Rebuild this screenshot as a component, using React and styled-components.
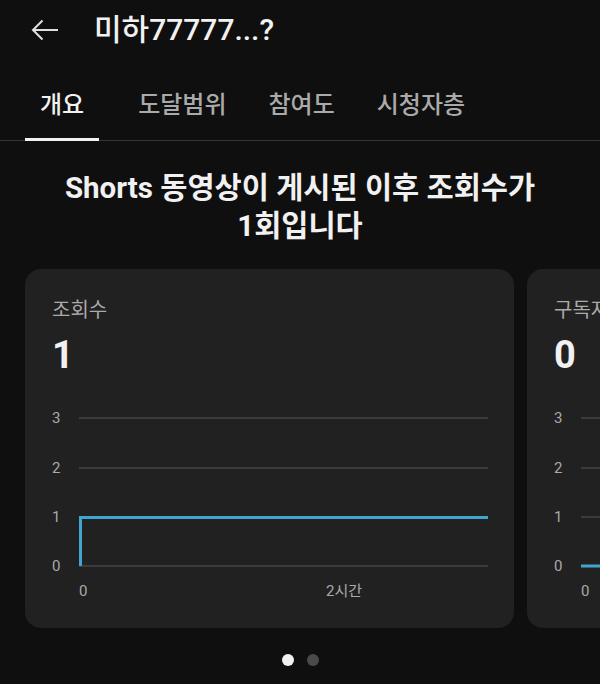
import React from "react";
import styled, { createGlobalStyle } from "styled-components";

const Global = createGlobalStyle`
  html, body { margin: 0; padding: 0; background: #0f0f0f; }
  body { font-family: Roboto, "Noto Sans CJK KR", sans-serif; color: #f1f1f1; }
  * { box-sizing: border-box; }
`;

const Page = styled.div`
  width: 600px;
  height: 684px;
  overflow: hidden;
  background: #0f0f0f;
`;

const Header = styled.div`
  height: 60px;
  display: flex;
  align-items: center;
  padding-left: 31px;
  gap: 35px;
`;

const Title = styled.div`
  font-size: 30px;
  font-weight: 500;
  color: #f1f1f1;
  line-height: 1;
`;

const TabBar = styled.div`
  height: 81px;
  display: flex;
  align-items: stretch;
  padding: 4px 0 0 25px;
  border-bottom: 1px solid #353535;
  gap: 12px;
`;

const Tab = styled.div`
  position: relative;
  display: flex;
  align-items: center;
  padding: 0 15px;
  margin-right: ${(p) => (p.$extra ? p.$extra : 0)}px;
  font-size: 24px;
  font-weight: 500;
  color: ${(p) => (p.$active ? "#f1f1f1" : "#aaaaaa")};
  &::after {
    content: "";
    display: ${(p) => (p.$active ? "block" : "none")};
    position: absolute;
    left: 0;
    right: 0;
    bottom: -1px;
    height: 3px;
    background: #f1f1f1;
  }
`;

const Heading = styled.h1`
  margin: 28px 0 24px;
  text-align: center;
  font-size: 29.5px;
  line-height: 38px;
  font-weight: 700;
  color: #f1f1f1;
`;

const CardRow = styled.div`
  display: flex;
  gap: 13px;
  padding-left: 25px;
  overflow: hidden;
`;

const Card = styled.div`
  flex: 0 0 489px;
  height: 359px;
  background: #212121;
  border-radius: 16px;
  padding-top: 28px;
  display: flex;
  flex-direction: column;
`;

const Label = styled.div`
  padding-left: 27px;
  font-size: 20px;
  line-height: 26px;
  color: #aaaaaa;
  white-space: nowrap;
`;

const Value = styled.div`
  padding-left: 27px;
  margin-top: 10px;
  font-size: 38px;
  line-height: 44px;
  font-weight: 700;
  color: #f1f1f1;
`;

const ChartSvg = styled.svg`
  display: block;
  margin-top: 23px;
  overflow: visible;
`;

const Dots = styled.div`
  display: flex;
  justify-content: center;
  gap: 13px;
  margin-top: 26px;
`;

const Dot = styled.span`
  width: 12px;
  height: 12px;
  border-radius: 50%;
  background: ${(p) => (p.$active ? "#f1f1f1" : "#4a4a4a")};
`;

const GRID_Y = [18, 68, 117, 166];
const LABELS = ["3", "2", "1", "0"];

function Chart({ line, xLabels }) {
  return (
    <ChartSvg width="489" height="200" viewBox="0 0 489 200">
      {GRID_Y.map((y, i) => (
        <g key={y}>
          <text
            x="27"
            y={y + 5}
            fill="#aaaaaa"
            fontSize="15"
            fontFamily="Roboto, sans-serif"
          >
            {LABELS[i]}
          </text>
          <line x1="54" x2="463" y1={y} y2={y} stroke="#454545" strokeWidth="1.5" />
        </g>
      ))}
      <path d={line} fill="none" stroke="#3ea6cf" strokeWidth="3" strokeLinejoin="miter" />
      {xLabels.map((l) => (
        <text
          key={l.t}
          x={l.x}
          y="196"
          fill="#aaaaaa"
          fontSize="15"
          textAnchor={l.anchor}
          fontFamily='Roboto, "Noto Sans CJK KR", sans-serif'
        >
          {l.t}
        </text>
      ))}
    </ChartSvg>
  );
}

const BackIcon = () => (
  <svg width="28" height="22" viewBox="0 0 28 22" fill="none">
    <path d="M27 11H2M11.5 1.5L2 11l9.5 9.5" stroke="#e0e0e0" strokeWidth="2" />
  </svg>
);

export default function App() {
  return (
    <Page>
      <Global />
      <Header>
        <BackIcon />
        <Title>미하77777...?</Title>
      </Header>
      <TabBar>
        <Tab $active $extra={12}>개요</Tab>
        <Tab>도달범위</Tab>
        <Tab>참여도</Tab>
        <Tab>시청자층</Tab>
      </TabBar>
      <Heading>
        Shorts 동영상이 게시된 이후 조회수가
        <br />
        1회입니다
      </Heading>
      <CardRow>
        <Card>
          <Label>조회수</Label>
          <Value>1</Value>
          <Chart
            line="M55.5 166V117.5H463"
            xLabels={[
              { t: "0", x: 54, anchor: "start" },
              { t: "2시간", x: 319, anchor: "middle" },
            ]}
          />
        </Card>
        <Card>
          <Label>구독자</Label>
          <Value>0</Value>
          <Chart
            line="M54 166H463"
            xLabels={[{ t: "0", x: 54, anchor: "start" }]}
          />
        </Card>
      </CardRow>
      <Dots>
        <Dot $active />
        <Dot />
      </Dots>
    </Page>
  );
}
